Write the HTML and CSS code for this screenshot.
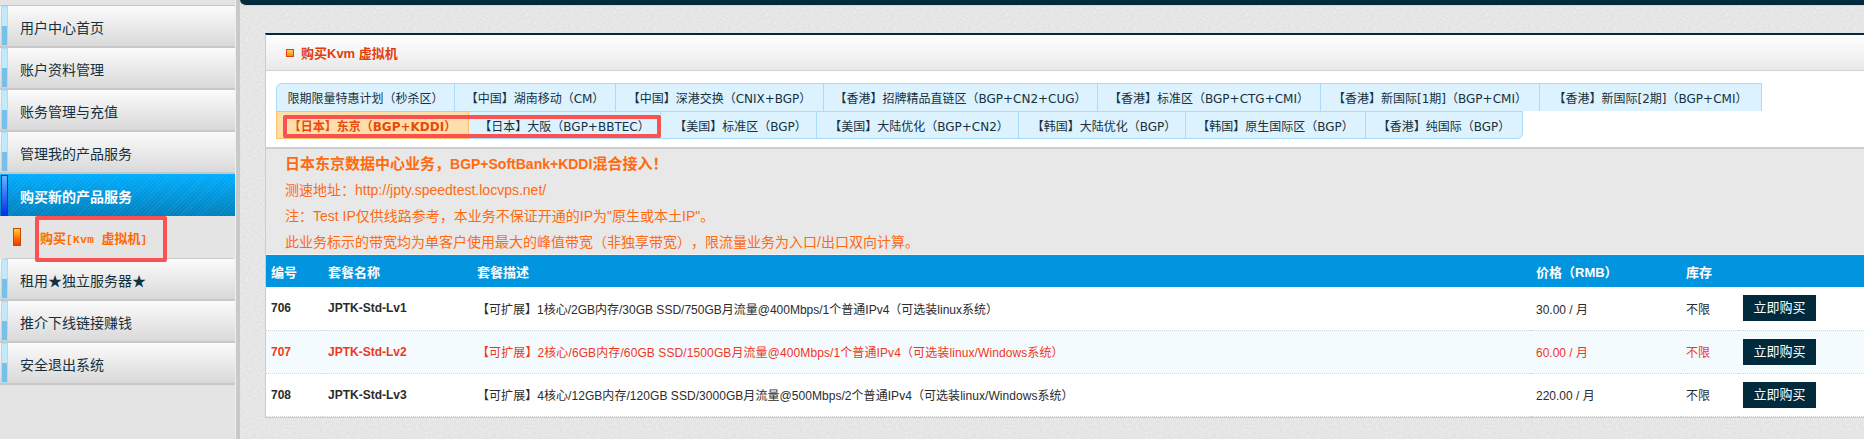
FILE: index.html
```html
<!DOCTYPE html>
<html lang="zh-CN">
<head>
<meta charset="utf-8">
<title>购买 Kvm 虚拟机</title>
<link rel="stylesheet" href="styles.css">
</head>
<body>
<div class="page">
  <aside class="sidebar">
    <nav class="menu">
      <a class="item"><span class="strip"></span><span class="label">用户中心首页</span></a>
      <a class="item"><span class="strip"></span><span class="label">账户资料管理</span></a>
      <a class="item"><span class="strip"></span><span class="label">账务管理与充值</span></a>
      <a class="item"><span class="strip"></span><span class="label">管理我的产品服务</span></a>
      <a class="item item-active"><span class="strip"></span><span class="label">购买新的产品服务</span></a>
      <div class="sub">
        <span class="sub-icon"></span>
        <span class="sub-text">购买<span class="sub-latin">[Kvm </span>虚拟机<span class="sub-latin">]</span></span>
        <span class="mark mark-sub"></span>
      </div>
      <a class="item"><span class="strip"></span><span class="label">租用★独立服务器★</span></a>
      <a class="item"><span class="strip"></span><span class="label">推介下线链接赚钱</span></a>
      <a class="item"><span class="strip"></span><span class="label">安全退出系统</span></a>
    </nav>
  </aside>
  <main class="main">
    <div class="topbar"></div>
    <section class="card">
      <header class="card-head">
        <span class="head-icon"></span>
        <h1 class="head-title">购买Kvm 虚拟机</h1>
      </header>
      <div class="tabs">
        <div class="tab-row row-a">
          <a class="tab">限期限量特惠计划（秒杀区）</a>
          <a class="tab">【中国】湖南移动（CM）</a>
          <a class="tab">【中国】深港交换（CNIX+BGP）</a>
          <a class="tab">【香港】招牌精品直链区（BGP+CN2+CUG）</a>
          <a class="tab">【香港】标准区（BGP+CTG+CMI）</a>
          <a class="tab">【香港】新国际[1期]（BGP+CMI）</a>
          <a class="tab">【香港】新国际[2期]（BGP+CMI）</a>
        </div>
        <div class="tab-row row-b">
          <a class="tab tab-on">【日本】东京（BGP+KDDI）</a>
          <a class="tab">【日本】大阪（BGP+BBTEC）</a>
          <a class="tab">【美国】标准区（BGP）</a>
          <a class="tab">【美国】大陆优化（BGP+CN2）</a>
          <a class="tab">【韩国】大陆优化（BGP）</a>
          <a class="tab">【韩国】原生国际区（BGP）</a>
          <a class="tab">【香港】纯国际（BGP）</a>
        </div>
        <span class="mark mark-tabs"></span>
      </div>
      <div class="notice">
        <p class="lead">日本东京数据中心业务，<b class="lead-latin">BGP+SoftBank+KDDI</b>混合接入！</p>
        <p>测速地址：http://jpty.speedtest.locvps.net/</p>
        <p>注：Test IP仅供线路参考，本业务不保证开通的IP为"原生或本土IP"。</p>
        <p>此业务标示的带宽均为单客户使用最大的峰值带宽（非独享带宽），限流量业务为入口/出口双向计算。</p>
      </div>
      <table class="plans">
        <colgroup>
          <col class="c-id"><col class="c-name"><col class="c-desc"><col class="c-price"><col class="c-stock"><col class="c-buy">
        </colgroup>
        <thead>
          <tr><th>编号</th><th>套餐名称</th><th>套餐描述</th><th>价格（RMB）</th><th>库存</th><th></th></tr>
        </thead>
        <tbody>
          <tr>
            <td class="strong">706</td><td class="strong">JPTK-Std-Lv1</td>
            <td>【可扩展】1核心/2GB内存/30GB SSD/750GB月流量@400Mbps/1个普通IPv4（可选装linux系统）</td>
            <td>30.00 / 月</td><td>不限</td><td><a class="buy">立即购买</a></td>
          </tr>
          <tr class="hot">
            <td class="strong">707</td><td class="strong">JPTK-Std-Lv2</td>
            <td class="desc-wide">【可扩展】2核心/6GB内存/60GB SSD/1500GB月流量@400Mbps/1个普通IPv4（可选装linux/Windows系统）</td>
            <td>60.00 / 月</td><td>不限</td><td><a class="buy">立即购买</a></td>
          </tr>
          <tr>
            <td class="strong">708</td><td class="strong">JPTK-Std-Lv3</td>
            <td class="desc-wide-2">【可扩展】4核心/12GB内存/120GB SSD/3000GB月流量@500Mbps/2个普通IPv4（可选装linux/Windows系统）</td>
            <td>220.00 / 月</td><td>不限</td><td><a class="buy">立即购买</a></td>
          </tr>
        </tbody>
      </table>
    </section>
  </main>
</div>
</body>
</html>
```
FILE: styles.css
```css
* { box-sizing: border-box; }
html, body { margin: 0; height: 100%; overflow: hidden; }
body {
  font-family: "Liberation Sans", "Noto Sans CJK SC", sans-serif;
  font-size: 12px;
  color: #2b2b2b;
  background: #e5e5e5;
  text-spacing-trim: space-all;
}
.page { display: flex; height: 439px; }

/* sidebar */
.sidebar {
  flex: 0 0 240px;
  padding-top: 5px;
  background: #e4e4e4;
  border-right: 4px solid #c9c9c9;
  box-shadow: inset -1px 0 0 #efefef;
}
.menu { display: flex; flex-direction: column; width: 235px; border-top: 1px solid #c6c6c6; }
.item {
  display: flex;
  align-items: center;
  height: 42px;
  background: linear-gradient(#fbfbfb, #d9d9d9);
  border-bottom: 2px solid #c8c8c8;
  color: #15303c;
  font-size: 14px;
}
.label { padding-top: 2px; }
.strip {
  flex: 0 0 7px;
  height: 40px;
  margin: 0 12px 0 1px;
  border: 1px solid #aedcf2;
  background: linear-gradient(#c4eafa 0 50%, #78c0ec 50% 100%);
}
.item-active {
  color: #fff;
  font-weight: bold;
  border-bottom: 0;
  background:
    repeating-linear-gradient(135deg, rgba(255,255,255,.07) 0 1px, transparent 1px 3px),
    linear-gradient(#00aeff, #0080bc);
}
.item-active .strip {
  height: 41px;
  border-color: #0040c8;
  background: linear-gradient(#5fb4ff, #0030e8);
}
.sub {
  position: relative;
  display: flex;
  align-items: center;
  height: 43px;
  width: 228px;
  margin-left: 5px;
  padding-left: 8px;
  border-bottom: 1px solid #c9c9c9;
}
.sub-icon {
  flex: 0 0 8px;
  height: 18px;
  margin-right: 19px;
  border: 1px solid #c84800;
  background: linear-gradient(#ffd04a, #ff6a00 60%, #e84000);
}
.sub-text { color: #ff6a00; font-weight: bold; font-size: 13px; }
.sub-latin { font-family: "Liberation Mono", monospace; font-size: 11px; letter-spacing: .5px; }

/* red annotations */
.mark { position: absolute; display: block; border: 4px solid #fa5252; border-radius: 2px; pointer-events: none; }
.mark-sub { left: 30px; top: 0; width: 132px; height: 46px; }
.mark-tabs { left: 17px; top: 44px; width: 378px; height: 23px; }

/* main */
.main {
  flex: 1 1 auto;
  min-width: 0;
  background-color: #ececec;
  background-image: url("data:image/svg+xml,%3Csvg xmlns='http://www.w3.org/2000/svg' width='240' height='240'%3E%3Cfilter id='n'%3E%3CfeTurbulence type='fractalNoise' baseFrequency='.35 .5' numOctaves='3' stitchTiles='stitch'/%3E%3CfeColorMatrix values='0 0 0 0 .5 0 0 0 0 .5 0 0 0 0 .5 .25 .25 0 0 -.12'/%3E%3C/filter%3E%3Crect width='240' height='240' filter='url(%23n)'/%3E%3C/svg%3E");
}
.topbar {
  height: 6px;
  background: #012b3c;
  border-bottom: 1px solid #d8d8d8;
  border-bottom-left-radius: 10px;
}
.card {
  margin: 27px 0 0 25px;
  background: #fff;
  border-top: 2px solid #012b3c;
  border-left: 1px solid #ccc;
  border-bottom: 1px solid #ccc;
}
.card-head {
  display: flex;
  align-items: center;
  height: 36px;
  padding-left: 20px;
  background: linear-gradient(#fff, #e9e9e9);
  border-bottom: 1px solid #d2d2d2;
}
.head-icon {
  flex: 0 0 8px;
  height: 8px;
  margin-right: 7px;
  border: 1px solid #e04000;
  background: linear-gradient(#ffd070, #f09000);
}
.head-title { margin: 0; font-size: 13px; font-weight: bold; color: #e23c0a; }

/* tabs */
.tabs { position: relative; height: 78px; padding: 12px 0 0 10px; border-bottom: 2px solid #cfcfcf; }
.tab-row { display: flex; height: 28px; }
.tab {
  display: flex;
  align-items: center;
  justify-content: center;
  height: 28px;
  background: #dcf3ff;
  border: 1px solid #a8dcf8;
  border-left: 0;
  color: #17303b;
  font-family: "DejaVu Sans", "Noto Sans CJK SC", sans-serif;
  font-size: 12px;
  white-space: nowrap;
}
.tab:first-child { border-left: 1px solid #a8dcf8; }
.row-a .tab { border-bottom: 0; }
.row-a .tab:first-child { border-top-left-radius: 6px; }
.row-b .tab:last-child { border-bottom-right-radius: 6px; }
.row-a .tab:nth-child(1) { width: 179px; }
.row-a .tab:nth-child(2) { width: 161px; }
.row-a .tab:nth-child(3) { width: 208px; }
.row-a .tab:nth-child(4) { width: 274px; }
.row-a .tab:nth-child(5) { width: 223px; }
.row-a .tab:nth-child(6) { width: 219px; }
.row-a .tab:nth-child(7) { width: 222px; }
.row-b .tab:nth-child(1) { width: 193px; }
.row-b .tab:nth-child(2) { width: 192px; }
.row-b .tab:nth-child(3) { width: 156px; padding-left: 4px; }
.row-b .tab:nth-child(4) { width: 202px; padding-left: 3px; }
.row-b .tab:nth-child(5) { width: 167px; padding-left: 4px; }
.row-b .tab:nth-child(6) { width: 180px; }
.row-b .tab:nth-child(7) { width: 157px; }
.row-b .tab.tab-on {
  background: #ffdfa9;
  border-color: #fcc267;
  color: #e8490f;
  font-weight: bold;
}

/* notice */
.notice { height: 106px; padding: 2px 0 0 19px; background: #e8e8e8; color: #ff6a10; font-size: 14px; border-bottom: 1px solid #f4f4f4; }
.notice p { margin: 0; height: 26px; line-height: 26px; }
.notice .lead { font-size: 15px; font-weight: bold; }
.lead-latin { font-size: 14px; }

/* table */
.plans { width: 1598px; table-layout: fixed; border-collapse: collapse; }
.c-id { width: 57px; }
.c-name { width: 149px; }
.c-desc { width: 1059px; }
.c-price { width: 150px; }
.c-stock { width: 57px; }
.c-buy { width: 126px; }
.plans th {
  height: 32px;
  padding: 0 0 0 5px;
  background: #0095de;
  color: #fff;
  font-size: 13px;
  font-weight: bold;
  text-align: left;
}
.plans td {
  height: 43px;
  padding: 0 0 0 5px;
  border-bottom: 1px dotted #d4d4d4;
  color: #2b2b2b;
  font-size: 12px;
}
.plans .strong { font-weight: bold; }
.plans .hot td { background: #f3fbfe; color: #f1361d; }
.plans .desc-wide { letter-spacing: .1px; }
.plans .desc-wide-2 { letter-spacing: .05px; }
.buy {
  display: block;
  width: 73px;
  height: 26px;
  line-height: 26px;
  text-align: center;
  background: #012b3c;
  color: #fff;
  font-size: 13px;
}
```
